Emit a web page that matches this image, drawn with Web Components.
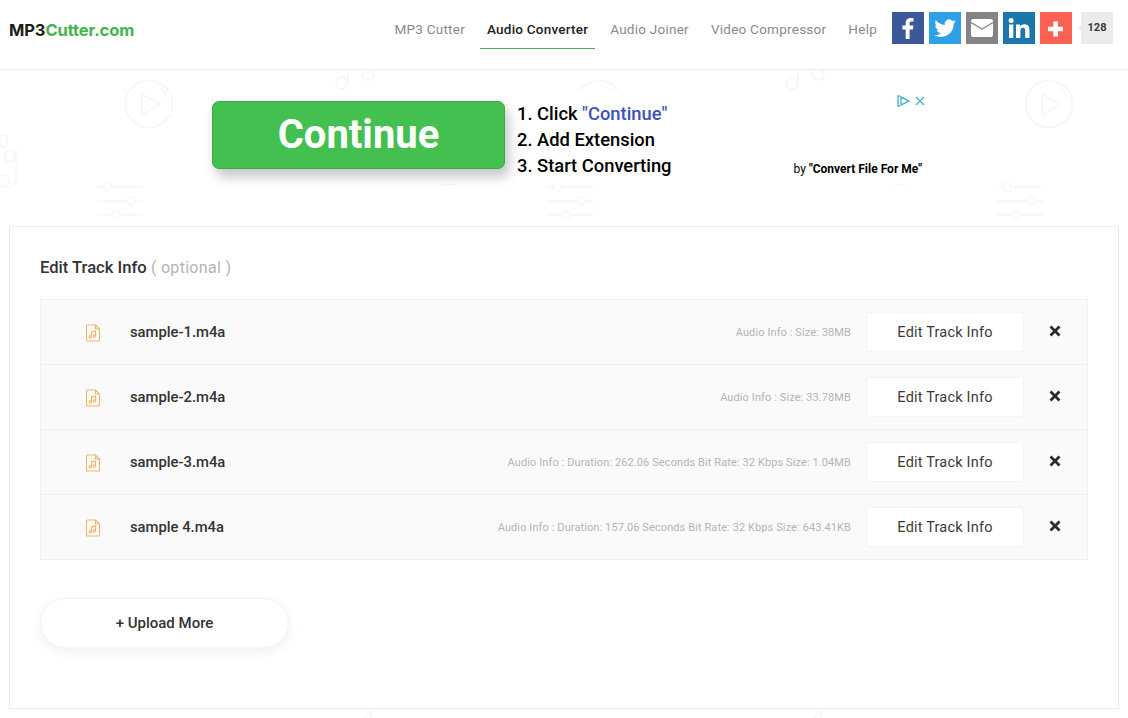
<!DOCTYPE html>
<html>
<head>
<meta charset="utf-8">
<title>Audio Converter</title>
<style>
html, body { margin: 0; padding: 0; background: #fff; }
body { font-family: Roboto, "Liberation Sans", sans-serif; color: #333; height: 718px; overflow: hidden; }
</style>
</head>
<body>
<site-header></site-header>
<page-body>
  <ad-banner></ad-banner>
  <track-card heading="Edit Track Info" note="( optional )">
    <track-row name="sample-1.m4a" info="Audio Info : Size: 38MB"></track-row>
    <track-row name="sample-2.m4a" info="Audio Info : Size: 33.78MB"></track-row>
    <track-row name="sample-3.m4a" info="Audio Info : Duration: 262.06 Seconds Bit Rate: 32 Kbps Size: 1.04MB"></track-row>
    <track-row name="sample 4.m4a" info="Audio Info : Duration: 157.06 Seconds Bit Rate: 32 Kbps Size: 643.41KB"></track-row>
  </track-card>
</page-body>

<script>
class SiteHeader extends HTMLElement {
  constructor() {
    super()
    this.attachShadow({ mode: 'open' }).innerHTML = `
    <style>
      :host { display: flex; align-items: flex-start; height: 69px; border-bottom: 1px solid #eee; background: #fff; position: relative; z-index: 1; }
      .logo { font: 700 16.5px Inter, sans-serif; letter-spacing: -.1px; color: #1c1c1c; margin: 20px 0 0 9px; line-height: 20px; }
      .logo span { color: #3fb54c; }
      nav { margin-left: auto; display: flex; height: 49px; }
      nav a { font-size: 13.5px; letter-spacing: .25px; color: #8a8a8a; line-height: 59px; height: 49px; padding: 0 7px; margin-right: 8px; }
      nav a.on { color: #222; font-weight: 500; letter-spacing: .22px; box-sizing: border-box; border-bottom: 1px solid #4caf50; }
      .share { display: flex; gap: 5px; margin: 12px 15px 0 0; }
      .share i { display: block; width: 32px; height: 32px; }
      .share svg { display: block; width: 32px; height: 32px; }
      .count { position: relative; width: 32px; height: 32px; margin-left: 4px; background: #ebebeb; font: 700 11px/32px Roboto, sans-serif; color: #3a3a3a; text-align: center; }
      .count::before { content: ''; position: absolute; left: -3px; top: 12px; border: 4px solid transparent; border-left: 0; border-right: 4px solid #ebebeb; }
    </style>
    <div class="logo">MP3<span>Cutter.com</span></div>
    <nav>
      <a>MP3 Cutter</a><a class="on">Audio Converter</a><a>Audio Joiner</a><a>Video Compressor</a><a>Help</a>
    </nav>
    <div class="share">
      <i style="background:#3b5998"><svg viewBox="0 0 32 32"><path fill="#fff" d="M17.6 27v-9.6h3.3l.5-3.8h-3.8v-2.4c0-1.1.3-1.8 1.9-1.8h2V6.200c-.4 0-1.600-.2-2.900-.2-2.900 0-4.900 1.800-4.900 5v2.600H10.400v3.800h3.300V27z"/></svg></i>
      <i style="background:#2f9fe8"><svg viewBox="0 0 32 32"><path transform="translate(1.600 1.900) scale(.9)" fill="#fff" d="M28 8.500c-.9.400-1.800.7-2.800.8 1-.6 1.800-1.600 2.200-2.700-1 .6-2 1-3.100 1.200a4.900 4.900 0 0 0-8.400 4.500C11.800 12.100 8.200 10.100 5.800 7.100c-1.300 2.300-.6 5.100 1.500 6.500-.8 0-1.600-.2-2.200-.6 0 2.400 1.700 4.400 3.900 4.900-.7.200-1.500.2-2.200.1.600 2 2.400 3.300 4.600 3.400-2.100 1.600-4.700 2.300-7.300 2 2.200 1.400 4.800 2.200 7.500 2.200 9.100 0 14.300-7.700 14-14.600 1-.7 1.800-1.500 2.400-2.500z"/></svg></i>
      <i style="background:#848484"><svg viewBox="0 0 32 32"><rect x="5" y="7" width="22" height="18" rx="2.200" fill="#fff"/><path d="M5 10.500 16 17l11-6.500" fill="none" stroke="#848484" stroke-width="1.300"/></svg></i>
      <i style="background:#1a76ad"><svg viewBox="0 0 32 32"><path fill="#fff" d="M6 12.500h4.300V26H6zM8.150 6a2.500 2.500 0 1 1 0 5 2.500 2.500 0 0 1 0-5zM13 12.500h4.100v1.900c.6-1.100 2-2.200 4.200-2.200 4.400 0 5.200 2.800 5.200 6.500V26h-4.300v-6.600c0-1.600 0-3.600-2.200-3.600s-2.600 1.700-2.600 3.500V26H13z"/></svg></i>
      <i style="background:#fb6155"><svg viewBox="0 0 32 32"><path fill="#fff" d="M13.300 9.500h4.600v5.200h5.100v4.600h-5.100v5.200h-4.600v-5.200H8v-4.600h5.300z"/></svg></i>
      <div class="count">128</div>
    </div>`
  }
}

// faint icons sit behind everything on the white page
const play = (x, y) => `<svg class="w" style="left:${x - 25}px;top:${y - 25}px" width="50" height="50" viewBox="0 0 50 50" fill="none"><circle cx="25" cy="25" r="23.5"/><path d="M36 9a19 19 0 0 1 7 9"/><path d="M18 15l18 10-18 11z"/></svg>`
const sliders = (x, y) => `<svg class="w" style="left:${x}px;top:${y}px" width="46" height="36" viewBox="0 0 46 36" fill="none"><path d="M0 4h6M14 4h32M0 18h30M38 18h8M0 32h15M23 32h23"/><circle cx="10" cy="4" r="4"/><circle cx="34" cy="18" r="4"/><circle cx="19" cy="32" r="4"/></svg>`
const notes = (x, y) => `<svg class="w" style="left:${x - 25}px;top:${y - 20}px" width="50" height="40" viewBox="0 0 50 40" fill="none"><circle cx="12" cy="28" r="6"/><circle cx="38" cy="19" r="6"/><path d="M18 28V8M44 19V2"/></svg>`
const bag = (x, y) => `<svg class="w" style="left:${x}px;top:${y}px" width="30" height="60" viewBox="0 0 30 60" fill="none"><rect x="0" y="0" width="7" height="12" rx="2"/><rect x="5" y="16" width="9" height="10" rx="2"/><path d="M16 14v30c0 6-6 9-10 9"/><circle cx="3" cy="46" r="6"/></svg>`
const tick = (x, y) => `<svg class="w" style="left:${x}px;top:${y}px" width="10" height="10" viewBox="0 0 10 10" fill="none"><path d="M1 9l7-6v6"/></svg>`

class PageBody extends HTMLElement {
  constructor() {
    super()
    const marks = [
      play(149, 104), play(599, 104), play(1049, 104),
      play(450, 161), play(900, 161),
      sliders(97, 183), sliders(547, 183), sliders(997, 183),
      notes(355, 75), notes(805, 75),
      bag(0, 135), tick(363, 709), tick(813, 709)
    ].join('')
    this.attachShadow({ mode: 'open' }).innerHTML = `
    <style>
      :host { display: block; position: relative; }
      .marks { position: absolute; left: 0; top: -70px; width: 1128px; height: 718px; overflow: hidden; }
      .w { position: absolute; stroke: #f6f6f6; stroke-width: 1.5; }
      .content { position: relative; }
    </style>
    <div class="marks">${marks}</div>
    <div class="content"><slot></slot></div>`
  }
}

class AdBanner extends HTMLElement {
  constructor() {
    super()
    this.attachShadow({ mode: 'open' }).innerHTML = `
    <style>
      :host { display: block; height: 156px; box-sizing: border-box; padding: 20px 0 0 212px; color: #000; }
      .box { position: relative; width: 714px; height: 94px; background: #fff; }
      .row { display: flex; padding-top: 11px; }
      .btn { width: 293px; height: 68px; box-sizing: border-box; background: #43c04f; border: 1px solid #3aa846; border-radius: 7px; color: #fff; font: 700 40px/66px Roboto, sans-serif; text-align: center; box-shadow: 4px 8px 12px rgba(0,0,0,.22); }
      ol { list-style: none; margin: 0 0 0 12px; padding: 0; font: 500 18.35px/26px Roboto, sans-serif; }
      b { font-weight: 500; color: #3f51b5; }
      .by { position: absolute; right: 4px; top: 72px; font: 400 12px/14px Roboto, sans-serif; }
      .by strong { font-weight: 700; }
      .choices { position: absolute; left: 685px; top: 5px; display: flex; gap: 5px; }
      .choices svg { display: block; }
    </style>
    <div class="box">
      <div class="row">
        <div class="btn">Continue</div>
        <ol><li>1. Click <b>"Continue"</b></li><li>2. Add Extension</li><li>3. Start Converting</li></ol>
      </div>
      <div class="by">by <strong>"Convert File For Me"</strong></div>
      <div class="choices">
        <svg width="13" height="12" viewBox="0 0 13 12" fill="none" stroke="#4fb3cc" stroke-width="1.4"><path d="M3 1H1v10h2M4 2l8 4-8 4z"/></svg>
        <svg width="10" height="12" viewBox="0 0 10 12" fill="none" stroke="#4fb3cc" stroke-width="1.4"><path d="M1 2l8 8M9 2l-8 8"/></svg>
      </div>
    </div>`
  }
}

class TrackCard extends HTMLElement {
  constructor() {
    super()
    this.attachShadow({ mode: 'open' }).innerHTML = `
    <style>
      :host { display: block; box-sizing: border-box; width: 1110px; height: 483px; margin-left: 9px; padding: 30px 30px 0; background: #fff; border: 1px solid #ececec; }
      h2 { margin: 0 0 20px; font: 500 16.6px/22px Roboto, sans-serif; color: #333; }
      h2 span { font-weight: 400; font-size: 16px; color: #b3b3b3; letter-spacing: .3px; }
      .list { width: 1048px; border: 1px solid #f1f1f1; border-bottom: 0; box-sizing: border-box; margin-bottom: 38px; }
      .more { display: block; width: 249px; height: 50px; border-radius: 25px; background: #fff; border: 1px solid #f3f3f3; box-sizing: border-box; font: 500 15px/48px Roboto, sans-serif; color: #333; text-align: center; box-shadow: 0 4px 12px rgba(0,0,0,.06); }
    </style>
    <h2></h2>
    <div class="list"><slot></slot></div>
    <div class="more">+ Upload More</div>`
    this.shadowRoot.querySelector('h2').innerHTML = `${this.getAttribute('heading')} <span>${this.getAttribute('note')}</span>`
  }
}

class TrackRow extends HTMLElement {
  constructor() {
    super()
    this.attachShadow({ mode: 'open' }).innerHTML = `
    <style>
      :host { display: flex; align-items: center; box-sizing: border-box; height: 65px; background: #fafafa; border-bottom: 1px solid #f1f1f1; }
      svg.file { margin: 2px 0 0 44px; width: 16px; height: 18px; flex: none; }
      .name { margin-left: 29px; font: 500 14.8px/20px Roboto, sans-serif; color: #333; }
      .info { margin-left: auto; padding-top: 2px; font: 400 11px/16px Roboto, sans-serif; letter-spacing: .1px; color: #b5b5b5; }
      .edit { width: 158px; height: 40px; margin-left: 15px; background: #fff; border-radius: 3px; border: 1px solid #f4f4f4; box-sizing: border-box; font: 400 14.5px/40px Roboto, sans-serif; letter-spacing: .2px; color: #3a3a3a; text-align: center; }
      svg.x { width: 12px; height: 12px; margin: 0 26px 2px 25px; flex: none; }
    </style>
    <svg class="file" viewBox="0 0 16 18" fill="none" stroke="#eeb56c" stroke-width="1.1"><path d="M2.500 1h8L14.500 5v11a1 1 0 0 1-1 1h-11a1 1 0 0 1-1-1V2a1 1 0 0 1 1-1zM10.500 1v4h4"/><path d="M6.500 13V8l4-1v5"/><circle cx="5.300" cy="13" r="1.200"/><circle cx="9.300" cy="12" r="1.200"/></svg>
    <span class="name"></span>
    <span class="info"></span>
    <div class="edit">Edit Track Info</div>
    <svg class="x" viewBox="0 0 12 12"><path d="M1.500 1.500l9 9M10.500 1.500l-9 9" stroke="#2b2b2b" stroke-width="2.800" fill="none"/></svg>`
    this.shadowRoot.querySelector('.name').textContent = this.getAttribute('name')
    this.shadowRoot.querySelector('.info').textContent = this.getAttribute('info')
  }
}

customElements.define('site-header', SiteHeader)
customElements.define('page-body', PageBody)
customElements.define('ad-banner', AdBanner)
customElements.define('track-card', TrackCard)
customElements.define('track-row', TrackRow)
</script>
</body>
</html>
